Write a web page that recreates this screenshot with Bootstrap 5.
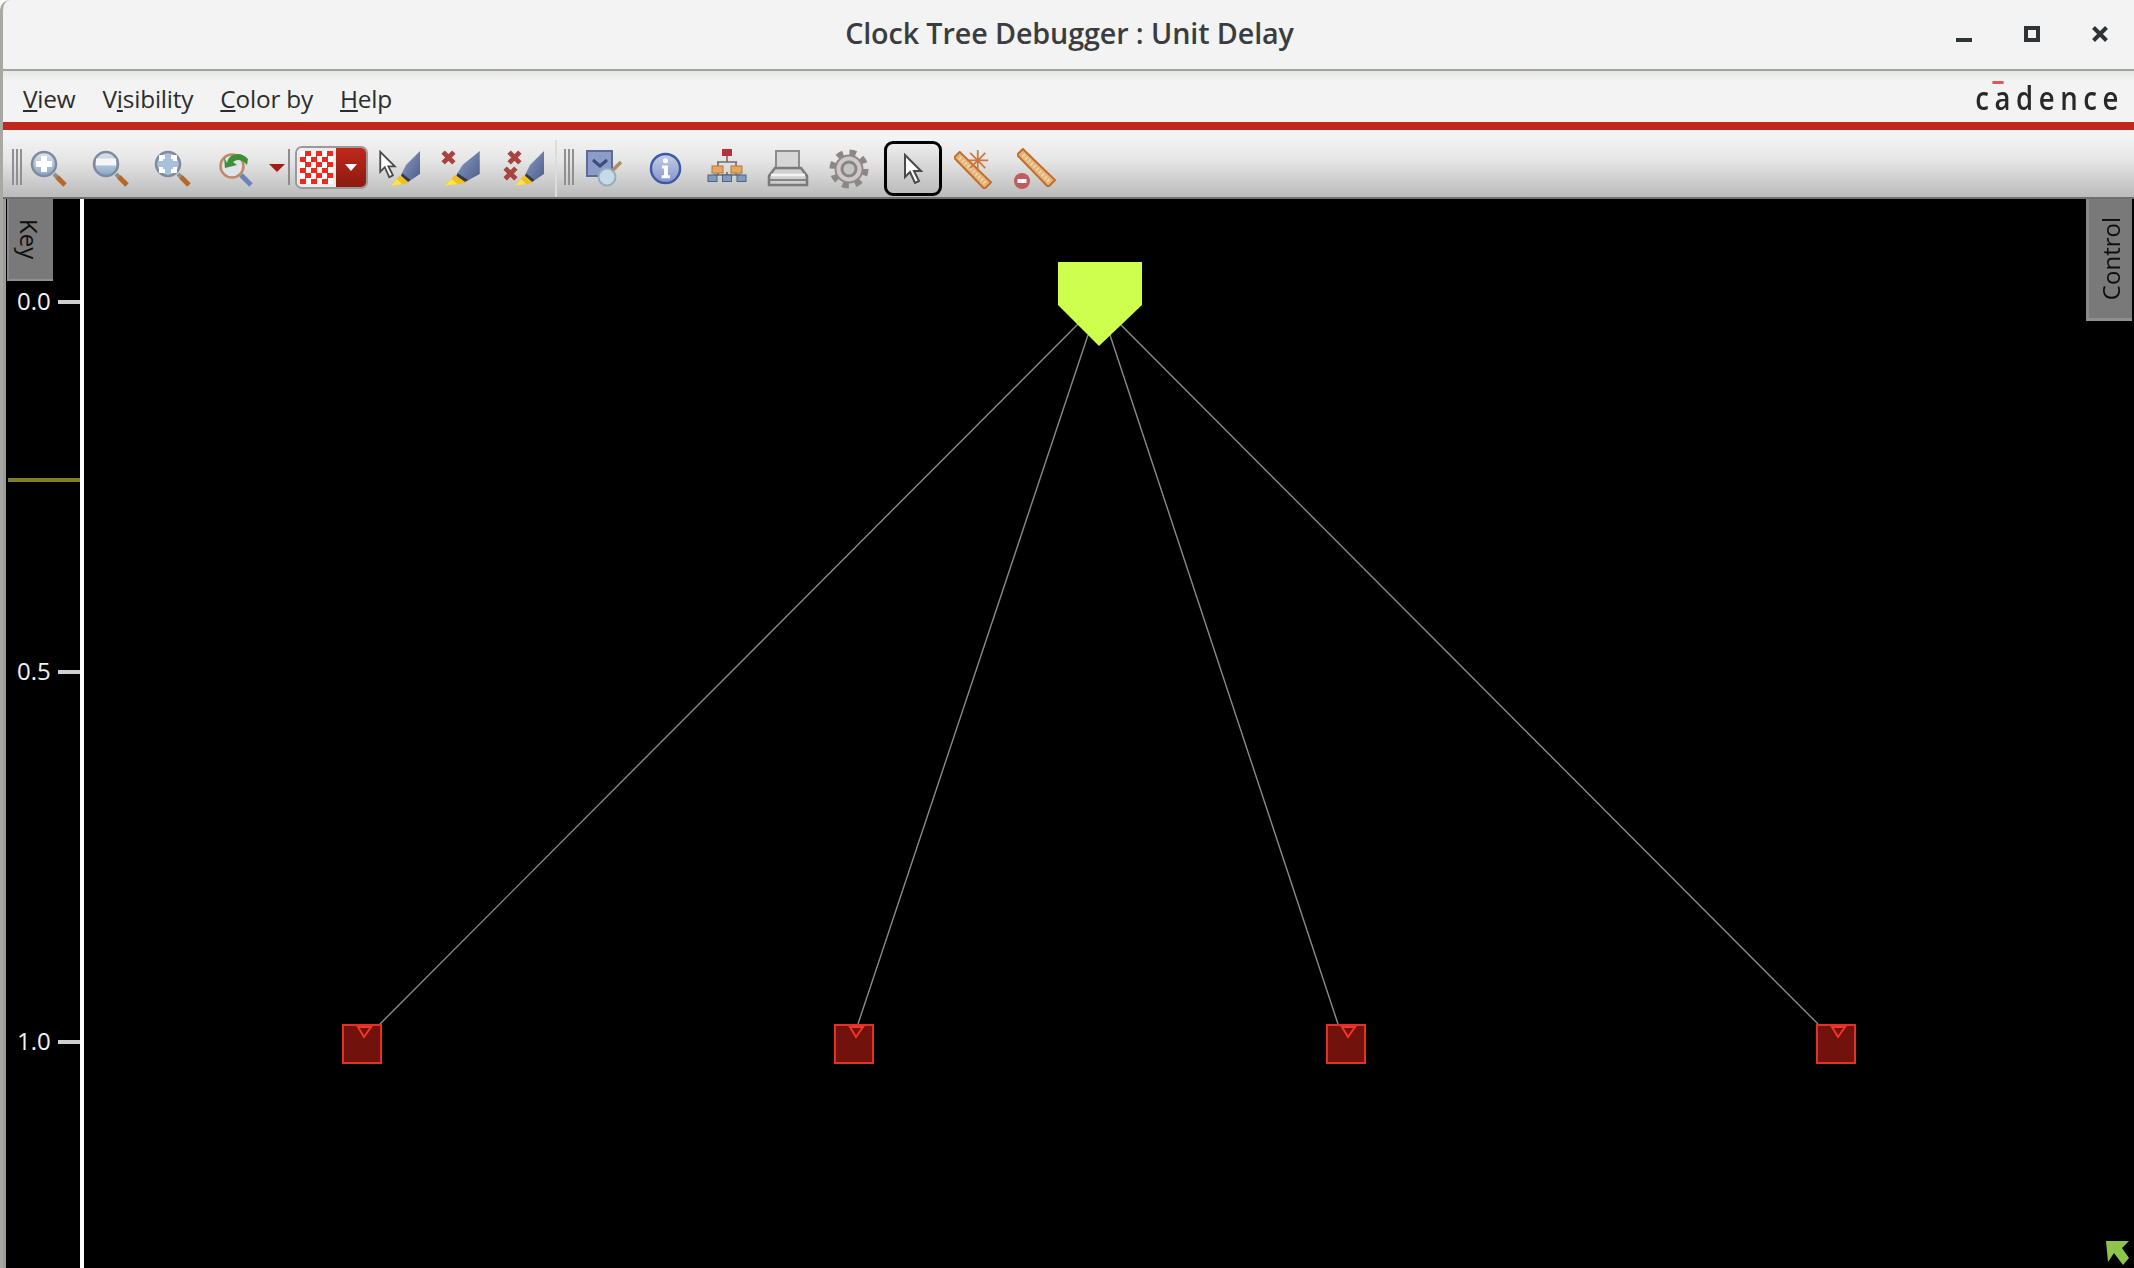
<!DOCTYPE html>
<html>
<head>
  <meta charset="utf-8">
  <meta name="viewport" content="width=device-width, initial-scale=1">
  <title>Clock Tree Debugger : Unit Delay</title>
  <link href="https://cdn.jsdelivr.net/npm/bootstrap@5.3.0/dist/css/bootstrap.min.css" rel="stylesheet">
  <style>
    html, body { height: 100%; background: #fff; overflow: hidden; }
    body { font-family: "Open Sans", "Noto Sans", sans-serif; color: #2e3436; }
    .app-window { height: 1268px; width: 2134px; border-left: 3px solid #a8a8a4; border-top-left-radius: 10px; background: #f3f3f3; }

    .title-strip { height: 71px; flex: none; border-bottom: 2px solid #a3a29d; padding-bottom: 4px; }
    .title-text { font-size: 28.7px; font-weight: 600; color: #3a3d3f; letter-spacing: -.1px; margin-left: 2px; }
    .win-controls { right: 26px; top: 26px; gap: 52px; }

    .menu-strip { height: 51px; flex: none; padding: 5px 0 0 20px; background: linear-gradient(#e6e7e7 0, #f3f3f3 10px); }
    .menu-strip .nav-link { padding: 0; margin-right: 27px; color: #2b2d2f; font-size: 24.4px; letter-spacing: -.2px; }
    .brand-logo { right: 10px; top: 8px; font-family: "Open Sans", sans-serif; font-weight: 600; font-size: 32px; line-height: 38px; letter-spacing: 6.5px; color: #26282a; transform: scaleX(.86); transform-origin: right; }
    .brand-bar { position: absolute; left: 20px; top: 2px; width: 13px; height: 3px; background: #e0565a; }
    .red-rule { height: 8px; flex: none; background: #c0281c; }
    .gap-strip { height: 10px; flex: none; }

    .tool-strip { height: 59px; flex: none; padding-left: 9px; background: linear-gradient(#f1f1f1, #e6e6e6 35%, #bdbdbd 96%); border-bottom: 2px solid #6f6f6f; }
    .tool-strip svg { display: block; filter: blur(.45px); }
    .grip-bars { width: 10px; height: 36px; flex: none; margin-top: -3px; background: repeating-linear-gradient(90deg, #8f8f8f 0 2px, transparent 2px 4px); }
    .tb-btn { width: 62px; height: 55px; flex: none; padding: 0; border: 3px solid transparent; border-radius: 9px; display: flex; align-items: center; justify-content: center; }
    .tb-btn.tb-first { margin-left: -4px; }
    .tb-btn.tb-tight { width: 61px; }
    .tb-btn.tb-active { width: 58px; border-color: #000; background: linear-gradient(#ececec, #bcbcbc); margin-left: 5px; }
    .tb-drop { width: 20px; flex: none; }
    .tb-sep { width: 2px; height: 36px; flex: none; background: #8c8c8c; margin: -3px 5px 0 2px; }
    .swatch-combo { width: 73px; height: 43px; flex: none; border: 2px solid #9a9a9a; border-radius: 7px; overflow: hidden; margin-right: 1px; margin-top: -3px; }
    .swatch-left { width: 41px; background: #ececec; }
    .swatch-check { width: 33px; height: 33px; background-color: #fff; background-image: conic-gradient(#f2281c 25%, transparent 0 50%, #f2281c 0 75%, transparent 0); background-size: 11px 11px; }
    .swatch-right { width: 32px; background: linear-gradient(#c0281c, #8c1a10); }
    .swatch-arrow { width: 0; height: 0; border-left: 6px solid transparent; border-right: 6px solid transparent; border-top: 7px solid #fff; }
    .tool-divider { width: 2px; height: 57px; background: #dcdcdc; margin: 0 7px 0 0; flex: none; }

    .tree-canvas { flex: 1 1 auto; border-left: 3px solid #9c9c9c; background: #000; overflow: hidden; }
    .tree-canvas > svg { display: block; }
    .tree-canvas text { font-family: "Open Sans", sans-serif; font-size: 24px; fill: #f2f2f2; }
    .side-tab { position: absolute; top: 0; background: #797979; color: #0e0e0e; display: flex; align-items: center; justify-content: center; writing-mode: vertical-rl; font-size: 24px; }
    .key-tab { left: 1px; width: 46px; height: 82px; padding-right: 4px; border-left: 2px solid #8a8a8a; border-bottom: 2px solid #8f8f8f; }
    .control-tab { right: 2px; width: 46px; height: 122px; border-left: 3px solid #8a8a8a; border-bottom: 3px solid #8f8f8f; }
    .control-tab span { transform: rotate(180deg); }
  </style>
</head>
<body>
  <!-- shared icon parts -->
  <svg width="0" height="0" class="position-absolute">
    <defs>
      <linearGradient id="lensFill" x1="0" y1="0" x2="0" y2="1"><stop offset="0" stop-color="#dfe6ee"/><stop offset="1" stop-color="#86a6c8"/></linearGradient>
      <linearGradient id="nibFill" x1="0" y1="0" x2="1" y2="1"><stop offset="0" stop-color="#8b9cc6"/><stop offset="1" stop-color="#4d5e8a"/></linearGradient>
      <linearGradient id="infoFill" x1="0" y1="0" x2="0" y2="1"><stop offset="0" stop-color="#c5cfe8"/><stop offset="1" stop-color="#8494cc"/></linearGradient>
      <symbol id="mag-handle" viewBox="0 0 38 38">
        <line x1="24" y1="24" x2="28" y2="28" stroke="#8a8f96" stroke-width="4"/>
        <line x1="27" y1="27" x2="35" y2="35" stroke="#b5682c" stroke-width="5"/>
      </symbol>
      <symbol id="pen" viewBox="0 0 30 35" preserveAspectRatio="none">
        <polygon points="29,0 29,23 20,29 11,22 15,14" fill="url(#nibFill)"/>
        <polygon points="11,22 20,29 17,31 10,25" fill="#343848"/>
        <polygon points="0,35 9,24 18,32" fill="#f0c020"/>
        <polygon points="0,35 6,28 11,33" fill="#f8e44c"/>
      </symbol>
      <symbol id="arrow-cursor" viewBox="0 0 20 32">
        <polygon points="2,2 2,24 7,19 12,30 16,28 11,18 18,18" fill="#fff" stroke="#4a4a4a" stroke-width="2"/>
      </symbol>
      <symbol id="red-x" viewBox="0 0 14 14">
        <path d="M2 2 12 12 M12 2 2 12" stroke="#a8433d" stroke-width="4.5" fill="none"/>
      </symbol>
      <symbol id="ruler" viewBox="0 0 40 40">
        <polygon points="6,1 39,33 32,40 0,7" fill="#e2b47a" stroke="#c26a28" stroke-width="2"/>
        <line x1="6" y1="7" x2="33" y2="34" stroke="#f1d3a6" stroke-width="4" stroke-dasharray="2 2"/>
      </symbol>
    </defs>
  </svg>

  <div class="app-window d-flex flex-column position-relative">
    <header class="title-strip d-flex align-items-center justify-content-center position-relative">
      <div class="title-text">Clock Tree Debugger : Unit Delay</div>
      <div class="win-controls position-absolute d-flex">
        <svg width="16" height="16" viewBox="0 0 16 16"><rect y="12" width="16" height="4" fill="#2e3436"/></svg>
        <svg width="16" height="16" viewBox="0 0 16 16"><rect x="2" y="2" width="12" height="12" fill="none" stroke="#2e3436" stroke-width="4"/></svg>
        <svg width="16" height="16" viewBox="0 0 16 16"><path d="M1.5 1.5 14.5 14.5 M14.5 1.5 1.5 14.5" stroke="#2e3436" stroke-width="4" fill="none"/></svg>
      </div>
    </header>

    <nav class="menu-strip nav align-items-center position-relative">
      <a class="nav-link" href="#"><u>V</u>iew</a>
      <a class="nav-link" href="#">V<u>i</u>sibility</a>
      <a class="nav-link" href="#"><u>C</u>olor by</a>
      <a class="nav-link" href="#"><u>H</u>elp</a>
      <div class="brand-logo position-absolute">cadence<span class="brand-bar"></span></div>
    </nav>
    <div class="red-rule"></div>
    <div class="gap-strip"></div>

    <div class="tool-strip d-flex align-items-center">
      <div class="grip-bars"></div>
      <!-- zoom in -->
      <button class="btn tb-btn tb-first"><svg width="38" height="38" viewBox="0 0 38 38"><circle cx="14" cy="14" r="12" fill="url(#lensFill)" stroke="#7f8b9c" stroke-width="2.5"/><path d="M14 6V22M6 14H22" stroke="#fff" stroke-width="6"/><use href="#mag-handle" width="38" height="38"/></svg></button>
      <!-- zoom out -->
      <button class="btn tb-btn"><svg width="38" height="38" viewBox="0 0 38 38"><circle cx="14" cy="14" r="12" fill="url(#lensFill)" stroke="#7f8b9c" stroke-width="2.5"/><path d="M4 12H24" stroke="#f4f6f8" stroke-width="7"/><use href="#mag-handle" width="38" height="38"/></svg></button>
      <!-- zoom fit -->
      <button class="btn tb-btn"><svg width="38" height="38" viewBox="0 0 38 38"><circle cx="14" cy="14" r="12" fill="#a9c0dc" stroke="#7f8b9c" stroke-width="2.5"/><path d="M7 11V7H11M17 7H21V11M21 17V21H17M11 21H7V17" stroke="#fff" stroke-width="4" fill="none"/><use href="#mag-handle" width="38" height="38"/></svg></button>
      <!-- zoom previous -->
      <button class="btn tb-btn"><svg class="ms-1" width="38" height="38" viewBox="0 0 38 38"><circle cx="14" cy="16" r="11.5" fill="#dfe3ea" stroke="#c08a62" stroke-width="2.5"/><path d="M9 13C11 3 23 1 30 9L29 15C24 9 19 9 15 12L19 15 7 18 6 7Z" fill="#3f8f3a"/><line x1="23" y1="25" x2="33" y2="35" stroke="#6a83b8" stroke-width="5"/></svg></button>
      <div class="tb-drop"><svg width="18" height="9" viewBox="0 0 18 9" class="ms-auto"><polygon points="1,0 17,0 9,8" fill="#a51c14"/></svg></div>
      <div class="tb-sep"></div>
      <div class="swatch-combo d-flex">
        <div class="swatch-left d-flex align-items-center justify-content-center"><div class="swatch-check"></div></div>
        <div class="swatch-right d-flex align-items-center justify-content-center"><div class="swatch-arrow"></div></div>
      </div>
      <!-- select + highlight -->
      <button class="btn tb-btn"><svg width="44" height="37" viewBox="0 0 44 37"><use href="#arrow-cursor" x="0" y="0" width="19" height="29"/><use href="#pen" x="13" y="1" width="30" height="35"/></svg></button>
      <!-- remove highlight -->
      <button class="btn tb-btn"><svg width="42" height="37" viewBox="0 0 42 37"><use href="#red-x" x="0" y="0" width="15" height="15"/><use href="#pen" x="3" y="1" width="37" height="35"/></svg></button>
      <!-- remove all -->
      <button class="btn tb-btn"><svg width="44" height="37" viewBox="0 0 44 37"><use href="#red-x" x="5" y="0" width="15" height="15"/><use href="#red-x" x="1" y="16" width="15" height="15"/><use href="#pen" x="13" y="1" width="30" height="35"/></svg></button>
      <div class="tool-divider"></div>
      <div class="grip-bars"></div>
      <!-- find -->
      <button class="btn tb-btn tb-tight"><svg width="38" height="38" viewBox="0 0 38 38"><rect x="1" y="1" width="25" height="25" fill="#8c9cc8" stroke="#5c6c9a" stroke-width="2"/><path d="M7 10 14 16 21 10" stroke="#3d4a7a" stroke-width="3" fill="none"/><circle cx="21" cy="27" r="8.5" fill="#c5dbe8" stroke="#93aebf" stroke-width="2"/><line x1="27" y1="20" x2="35" y2="12" stroke="#b58a5c" stroke-width="3.5"/></svg></button>
      <!-- info -->
      <button class="btn tb-btn tb-tight"><svg width="33" height="33" viewBox="0 0 34 34"><circle cx="17" cy="17" r="15" fill="url(#infoFill)" stroke="#3f5aa5" stroke-width="2.5"/><circle cx="17" cy="9" r="2.6" fill="#fff"/><path d="M13.5 14H19.5V24H21.5V27H13V24H15.5V17H13.5Z" fill="#fff"/></svg></button>
      <!-- hierarchy -->
      <button class="btn tb-btn tb-tight"><svg class="mb-2" width="40" height="34" viewBox="0 0 40 34"><path d="M20 8V14M10 14H30M11 14V18M29 14V18M11 24V27M29 24V27M6 27H34M6 27V29M20 24V29M34 27V29" stroke="#6e6e6e" stroke-width="1.6" fill="none"/><rect x="15" y="1" width="10" height="7" fill="#b5323a"/><rect x="5" y="18" width="11" height="7" fill="#e6a85e" stroke="#b8753a"/><rect x="24" y="18" width="11" height="7" fill="#e6a85e" stroke="#b8753a"/><rect x="1" y="27" width="9" height="6.5" fill="#7f9cbb" stroke="#4d6580"/><rect x="15.5" y="27" width="9" height="6.5" fill="#7f9cbb" stroke="#4d6580"/><rect x="30" y="27" width="9" height="6.5" fill="#7f9cbb" stroke="#4d6580"/></svg></button>
      <!-- print -->
      <button class="btn tb-btn tb-tight"><svg width="42" height="40" viewBox="0 0 42 40"><rect x="9" y="2" width="23" height="20" fill="#d6d6d6" stroke="#8c8c8c" stroke-width="2"/><path d="M8 19H34L40 27V36H2V27Z" fill="#cfcfcf" stroke="#7a7a7a" stroke-width="2.5"/><path d="M4 26H38" stroke="#f4f4f4" stroke-width="2.5"/><path d="M3 31H39" stroke="#848484" stroke-width="2"/></svg></button>
      <!-- settings -->
      <button class="btn tb-btn tb-tight"><svg width="40" height="40" viewBox="0 0 40 40"><circle cx="20" cy="20" r="16.5" fill="none" stroke="#8c8786" stroke-width="6" stroke-dasharray="6.5 6.46"/><circle cx="20" cy="20" r="13.5" fill="#cfc9c7" stroke="#8f8a89" stroke-width="2"/><circle cx="20" cy="20" r="7" fill="#c4c4c4" stroke="#8a8685" stroke-width="3"/></svg></button>
      <!-- pointer -->
      <button class="btn tb-btn tb-active"><svg width="20" height="32" viewBox="0 0 20 32"><use href="#arrow-cursor" width="20" height="32"/></svg></button>
      <!-- ruler add -->
      <button class="btn tb-btn"><svg width="38" height="40" viewBox="0 0 40 42"><use href="#ruler" y="2" width="40" height="40"/><path d="M25 1V23M14 12H36M17 4 33 20M33 4 17 20" stroke="#d0763a" stroke-width="1.8"/></svg></button>
      <!-- ruler remove -->
      <button class="btn tb-btn"><svg width="42" height="42" viewBox="0 0 42 42"><use href="#ruler" x="3" y="0" width="39" height="39"/><circle cx="8" cy="33" r="8" fill="#c25a5e"/><rect x="3.5" y="31" width="9" height="4" fill="#fff"/></svg></button>
    </div>

    <main class="tree-canvas position-relative">
      <!-- viewBox uses window coordinates -->
      <svg width="2125" height="1069" viewBox="6 199 2125 1069">
        <rect x="80" y="197" width="4" height="1075" fill="#fff"/>
        <rect x="8" y="478" width="72" height="4" fill="#808024"/>
        <rect x="58" y="300" width="22" height="4" fill="#cfcfcf"/>
        <rect x="58" y="670" width="22" height="4" fill="#cfcfcf"/>
        <rect x="58" y="1040" width="22" height="4" fill="#cfcfcf"/>
        <text x="17" y="310">0.0</text>
        <text x="17" y="680">0.5</text>
        <text x="17" y="1050">1.0</text>

        <g stroke="#8a8a8a" stroke-width="1.4">
          <line x1="1078" y1="324" x2="380" y2="1024"/>
          <line x1="1088" y1="335" x2="858" y2="1024"/>
          <line x1="1110" y1="335" x2="1338" y2="1024"/>
          <line x1="1120" y1="324" x2="1818" y2="1024"/>
        </g>
        <polygon points="1058,262 1142,262 1142,305 1099,346 1058,305" fill="#ceff4e"/>

        <g fill="#72120c" stroke="#e2302a" stroke-width="2">
          <rect x="343" y="1025" width="38" height="38"/>
          <rect x="835" y="1025" width="38" height="38"/>
          <rect x="1327" y="1025" width="38" height="38"/>
          <rect x="1817" y="1025" width="38" height="38"/>
        </g>
        <g fill="none" stroke="#f0352c" stroke-width="2">
          <polygon points="358,1027 371,1027 364,1037"/>
          <polygon points="850,1027 863,1027 856,1037"/>
          <polygon points="1342,1027 1355,1027 1348,1037"/>
          <polygon points="1832,1027 1845,1027 1838,1037"/>
        </g>
        <polygon points="2106,1241 2129,1241 2122,1248 2129,1258 2123,1265 2114,1253 2108,1262" fill="#8fc44c"/>
      </svg>
      <div class="side-tab key-tab">Key</div>
      <div class="side-tab control-tab"><span>Control</span></div>
    </main>
  </div>

  <script src="https://cdn.jsdelivr.net/npm/bootstrap@5.3.0/dist/js/bootstrap.bundle.min.js"></script>
</body>
</html>
